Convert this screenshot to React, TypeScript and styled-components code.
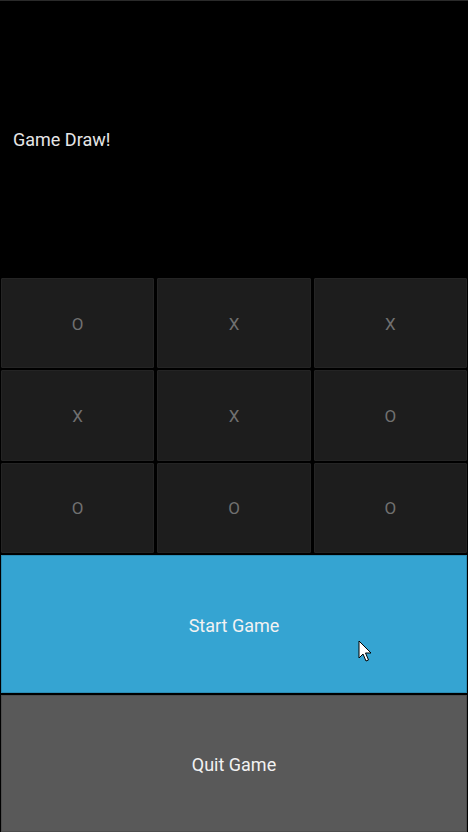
import { createGlobalStyle } from "styled-components";
import styled from "styled-components";

const board = ["O", "X", "X", "X", "X", "O", "O", "O", "O"];

const Global = createGlobalStyle`
  html, body {
    margin: 0;
    padding: 0;
    background: #000;
  }
  body {
    font-family: Roboto, "Noto Sans", sans-serif;
  }
`;

const Screen = styled.div`
  position: relative;
  width: 468px;
  height: 832px;
  display: flex;
  flex-direction: column;
  background: #000;
  border-top: 1px solid #2a2a2a;
  box-sizing: border-box;
  overflow: hidden;
`;

const Status = styled.div`
  height: 276px;
  display: flex;
  align-items: center;
  padding: 0 0 0 13px;
  color: #e6e6e6;
  font-size: 18px;
  flex-shrink: 0;
`;

const Board = styled.div`
  height: 276px;
  display: grid;
  grid-template-columns: repeat(3, 1fr);
  grid-template-rows: repeat(3, 1fr);
  gap: 2px 3px;
  padding: 1px 1px 0 1px;
  box-sizing: border-box;
  flex-shrink: 0;
`;

const Cell = styled.div`
  background: #1d1d1d;
  border: 1px solid #242424;
  border-radius: 1px;
  display: flex;
  align-items: center;
  justify-content: center;
  padding-top: 1px;
  color: #707070;
  font-size: 17px;
`;

const ActionButton = styled.div<{ $bg: string; $edge: string }>`
  flex: 1;
  margin: 2px 1px 0 1px;
  padding-top: 3px;
  background: ${(p) => p.$bg};
  border: 1px solid ${(p) => p.$edge};
  display: flex;
  align-items: center;
  justify-content: center;
  color: #f2f2f2;
  font-size: 18px;
`;

const Cursor = styled.svg`
  position: absolute;
  left: 358px;
  top: 639px;
`;

export default function App() {
  return (
    <>
      <Global />
      <Screen>
        <Status>Game Draw!</Status>
        <Board>
          {board.map((v, i) => (
            <Cell key={i}>{v}</Cell>
          ))}
        </Board>
        <ActionButton $bg="#35a4d2" $edge="#2c8db5">
          Start Game
        </ActionButton>
        <ActionButton $bg="#595959" $edge="#4d4d4d">
          Quit Game
        </ActionButton>
        <Cursor width="16" height="24" viewBox="0 0 16 24">
          <path
            d="M1 1 L1 18 L5 14 L8 21 L10.5 20 L7.5 13 L13 13 Z"
            fill="#fff"
            stroke="#000"
            strokeWidth="1"
            strokeLinejoin="miter"
          />
        </Cursor>
      </Screen>
    </>
  );
}
